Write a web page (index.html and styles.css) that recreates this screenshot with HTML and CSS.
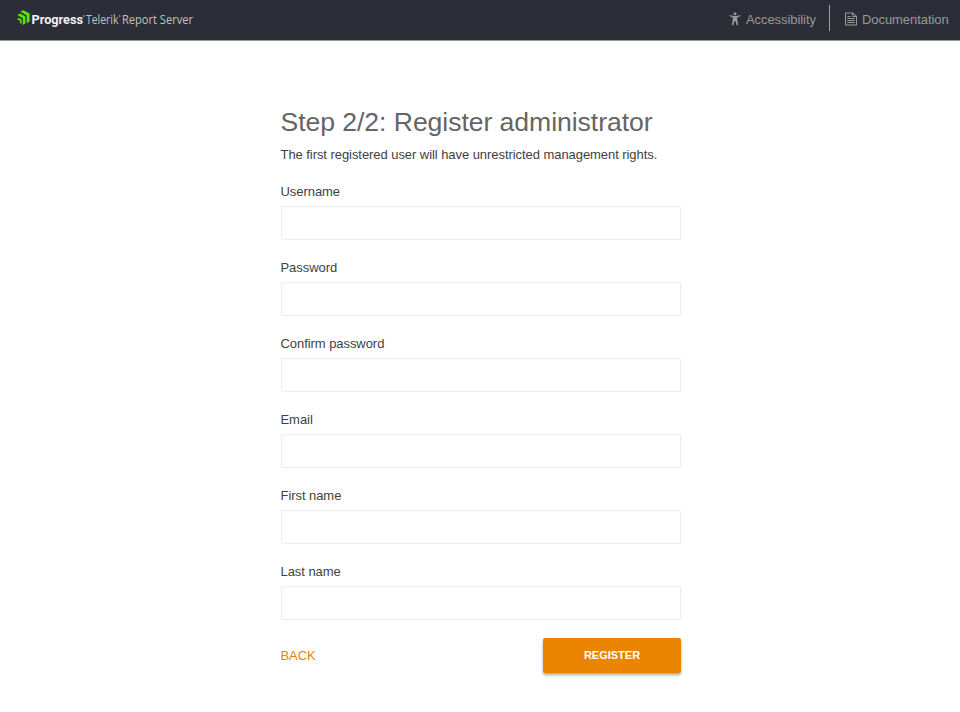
FILE: index.html
```html
<!DOCTYPE html>
<html lang="en">
<head>
<meta charset="utf-8">
<title>Telerik Report Server</title>
<link rel="stylesheet" href="styles.css">
</head>
<body>
<header class="topbar">
  <svg class="logo" width="200" height="24" viewBox="0 0 200 24" role="img" aria-label="Progress Telerik Report Server">
    <g fill="#5ce500">
      <path d="M4.400 2.600 7.400 1.200 13.600 4.600V12.600L10.700 14.200V6.600Z"/>
      <path d="M1.300 5.900 4.200 4.400 9.400 7.400V14.600L6.800 16V9.200Z"/>
      <path d="M.8 9.900 2.700 8.900 5.600 10.500V15L3.900 14.100V11.700Z"/>
    </g>
    <text class="brand" x="15.500" y="15" textLength="51.500" lengthAdjust="spacingAndGlyphs">Progress</text>
    <text class="product" x="70" y="15" textLength="32.500" lengthAdjust="spacingAndGlyphs">Telerik</text>
    <text class="product" x="106" y="15" textLength="71" lengthAdjust="spacingAndGlyphs">Report Server</text>
    <g fill="#c2c2c5"><circle cx="67.700" cy="7" r=".8"/><circle cx="103.700" cy="7" r=".8"/></g>
  </svg>
  <nav class="links">
    <a class="link">
      <svg class="icon" width="12" height="14" viewBox="0 0 12 14"><circle cx="6" cy="1.700" r="1.500"/><path d="M.7 3.100 4.500 3.900H7.500L11.300 3.100V4.300L8.300 5.300V8L9.200 13.200H7.700L6.400 9H5.600L4.300 13.200H2.800L3.700 8V5.300L.7 4.300Z"/></svg>
      <span>Accessibility</span>
    </a>
    <a class="link docs">
      <svg class="icon" width="12" height="14" viewBox="0 0 12 14"><path fill-rule="evenodd" d="M0 .5H8L12 4.200V13.500H0ZM1 1.500V12.500H11V5H7.200V1.500ZM8.200 2V4H10.400Z"/><path d="M2.300 4H5.500V5H2.300ZM2.300 6H9.700V7H2.300ZM2.300 8H9.700V9H2.300ZM2.300 10H9.700V11H2.300Z"/></svg>
      <span>Documentation</span>
    </a>
  </nav>
</header>
<main class="page">
  <h1>Step 2/2: Register administrator</h1>
  <p class="intro">The first registered user will have unrestricted management rights.</p>
  <form>
    <div class="field"><label for="username">Username</label><input id="username" type="text"></div>
    <div class="field"><label for="password">Password</label><input id="password" type="password"></div>
    <div class="field"><label for="confirm">Confirm password</label><input id="confirm" type="password"></div>
    <div class="field"><label for="email">Email</label><input id="email" type="text"></div>
    <div class="field"><label for="first">First name</label><input id="first" type="text"></div>
    <div class="field"><label for="last">Last name</label><input id="last" type="text"></div>
    <div class="actions"><a class="back">BACK</a><button type="button">REGISTER</button></div>
  </form>
</main>
</body>
</html>
```
FILE: styles.css
```css
* { box-sizing: border-box; }
body {
  margin: 0;
  padding-bottom: 30px;
  background: #fff;
  color: #3f3f3f;
  font: 13px/16px "Liberation Sans", Arial, sans-serif;
  letter-spacing: -.06px;
}
.topbar {
  height: 41px;
  padding: 0 11.400px 0 16px;
  display: flex;
  justify-content: space-between;
  align-items: flex-start;
  background: #2b2e37;
  border-bottom: 1px solid #96979b;
}
.logo { margin-top: 9px; letter-spacing: 0; }
.brand { font: bold 12.500px Roboto, sans-serif; fill: #f4f4f4; }
.product { font: 400 12.500px "Open Sans", sans-serif; fill: #c2c2c5; }
.links { display: flex; padding-top: 5px; color: #999; }
.link { display: flex; align-items: center; height: 26px; gap: 4.500px; padding-top: 3px; }
.link .icon { fill: currentColor; margin-top: -2px; }
.link:first-child { padding-right: 13.500px; }
.docs { border-left: 1px solid #a0a0a2; padding-left: 15px; }
.page { width: 400.500px; margin: 65px 0 0 280.500px; }
h1 { margin: 0; font-size: 26.600px; line-height: 32px; font-weight: 400; color: #656565; }
.intro { margin: 9px 0 21px; }
.field { height: 76px; }
label { display: block; margin-bottom: 5.500px; }
input {
  display: block;
  width: 100%;
  height: 34px;
  border: 1px solid #ececec;
  border-radius: 2px;
  background: #fff;
  padding: 0 10px;
}
.actions { display: flex; justify-content: space-between; align-items: center; height: 35px; margin-top: -1.600px; }
.back { color: #e98300; }
button {
  width: 138px;
  height: 35px;
  border: 0;
  border-radius: 2px;
  padding: 0 0 1px;
  background: #eb8500;
  color: #fff;
  font: bold 11px "Liberation Sans", Arial, sans-serif;
  box-shadow: 0 2px 3px rgba(0, 0, 0, .35);
}
```
